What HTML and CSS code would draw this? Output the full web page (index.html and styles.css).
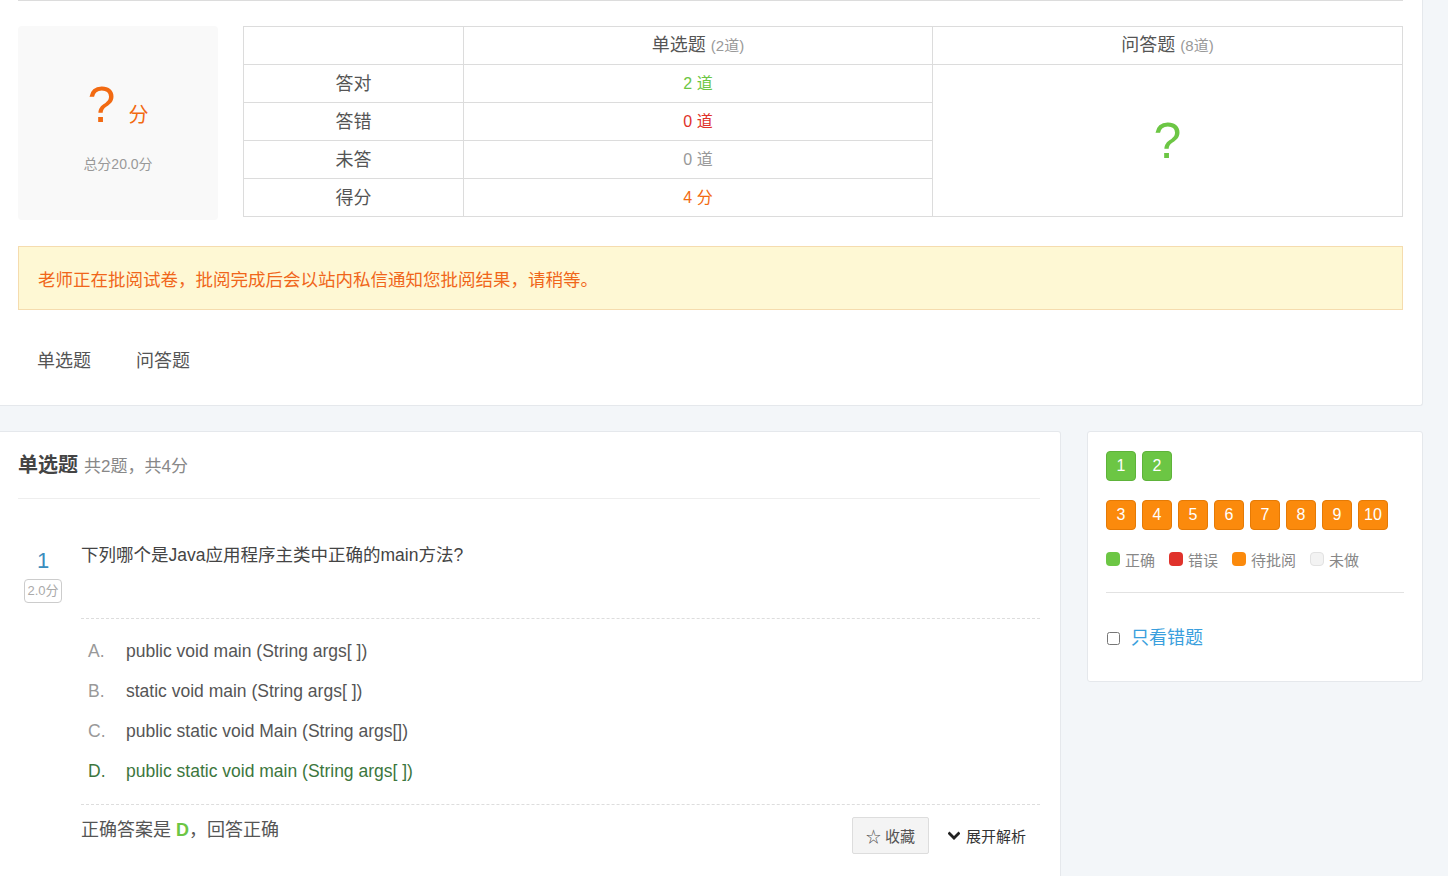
FILE: index.html
```html
<!DOCTYPE html>
<html lang="zh-CN">
<head>
<meta charset="utf-8">
<title>考试结果</title>
<link rel="stylesheet" href="styles.css">
</head>
<body>
<div class="page">
  <section class="summary-card">
    <div class="summary-inner">
      <div class="summary-row">
        <div class="score-box">
          <div class="score-main"><span class="score-q">?</span><span class="score-unit">分</span></div>
          <div class="score-total">总分20.0分</div>
        </div>
        <table class="stat-table">
          <colgroup><col class="c1"><col class="c2"><col class="c3"></colgroup>
          <tr>
            <th></th>
            <th>单选题 <span class="th-sub">(2道)</span></th>
            <th>问答题 <span class="th-sub">(8道)</span></th>
          </tr>
          <tr>
            <td>答对</td>
            <td class="v green">2 <span class="u">道</span></td>
            <td rowspan="4" class="big-q">?</td>
          </tr>
          <tr>
            <td>答错</td>
            <td class="v red">0 <span class="u">道</span></td>
          </tr>
          <tr>
            <td>未答</td>
            <td class="v grey">0 <span class="u">道</span></td>
          </tr>
          <tr>
            <td>得分</td>
            <td class="v orange">4 <span class="u">分</span></td>
          </tr>
        </table>
      </div>
      <div class="alert">老师正在批阅试卷，批阅完成后会以站内私信通知您批阅结果，请稍等。</div>
      <nav class="tabs">
        <span class="tab">单选题</span>
        <span class="tab">问答题</span>
      </nav>
    </div>
  </section>

  <div class="main-row">
    <section class="question-card">
      <header class="sec-head"><span class="sec-title">单选题</span><span class="sec-sub">共2题，共4分</span></header>
      <div class="question">
        <div class="q-num">
          <div class="q-index">1</div>
          <span class="q-score">2.0分</span>
        </div>
        <div class="q-body">
          <div class="q-title">下列哪个是Java应用程序主类中正确的main方法?</div>
          <ul class="options">
            <li class="opt"><span class="opt-l">A.</span><span>public void main (String args[ ])</span></li>
            <li class="opt"><span class="opt-l">B.</span><span>static void main (String args[ ])</span></li>
            <li class="opt"><span class="opt-l">C.</span><span>public static void Main (String args[])</span></li>
            <li class="opt correct"><span class="opt-l">D.</span><span>public static void main (String args[ ])</span></li>
          </ul>
          <div class="answer-row">
            <div class="answer">正确答案是 <b class="ans-key">D</b>，回答正确</div>
            <div class="actions">
              <button class="btn-fav">☆ 收藏</button>
              <span class="expand"><svg class="chev" width="12" height="10" viewBox="0 0 12 10"><polyline points="1.5,2.5 6,7 10.5,2.5" fill="none" stroke="#222" stroke-width="2.8" stroke-linecap="square"/></svg>展开解析</span>
            </div>
          </div>
        </div>
      </div>
    </section>

    <aside class="nav-card">
      <div class="num-row">
        <span class="num ok">1</span><span class="num ok">2</span>
      </div>
      <div class="num-row">
        <span class="num wait">3</span><span class="num wait">4</span><span class="num wait">5</span><span class="num wait">6</span><span class="num wait">7</span><span class="num wait">8</span><span class="num wait">9</span><span class="num wait">10</span>
      </div>
      <div class="legend">
        <span class="lg"><i class="dot ok"></i><span>正确</span></span>
        <span class="lg"><i class="dot bad"></i><span>错误</span></span>
        <span class="lg"><i class="dot wait"></i><span>待批阅</span></span>
        <span class="lg"><i class="dot none"></i><span>未做</span></span>
      </div>
      <label class="only-wrong"><input type="checkbox" class="cb"><span>只看错题</span></label>
    </aside>
  </div>
</div>
</body>
</html>
```
FILE: styles.css
```css
* { box-sizing: border-box; }
body {
  margin: 0;
  background: #f3f6f9;
  font-family: "Liberation Sans", "Noto Sans CJK SC", sans-serif;
  color: #555;
}
.page { width: 1423px; }

.summary-card {
  background: #fff;
  border-right: 1px solid #e5e8ec;
  border-bottom: 1px solid #e5e8ec;
  border-bottom-right-radius: 3px;
  padding: 0 19px 0 18px;
}
.summary-inner {
  border-top: 1px solid #dcdcdc;
  padding-top: 25px;
}
.summary-row { display: flex; gap: 25px; align-items: flex-start; }
.score-box {
  width: 200px;
  height: 194px;
  background: #f9f9f9;
  border-radius: 4px;
  display: flex;
  flex-direction: column;
  align-items: center;
  padding-top: 49px;
}
.score-main { display: flex; align-items: baseline; color: #f26a12; }
.score-q { font-size: 50px; line-height: 60px; }
.score-unit { font-size: 20px; margin-left: 13px; font-family: "Noto Sans CJK SC", sans-serif; }
.score-total { font-size: 14px; color: #999; margin-top: 19px; line-height: 20px; }

.stat-table {
  width: 1159px;
  border-collapse: collapse;
  table-layout: fixed;
  border: 1px solid #dcdcdc;
}
.stat-table col.c1 { width: 220px; }
.stat-table col.c2 { width: 469px; }
.stat-table col.c3 { width: 470px; }
.stat-table th, .stat-table td {
  border: 1px solid #dcdcdc;
  height: 38px;
  padding: 0;
  text-align: center;
  font-weight: normal;
  font-size: 18px;
  color: #555;
  line-height: 36px;
}
.th-sub { font-size: 15px; color: #999; }
.stat-table td.v { font-size: 16px; }
.stat-table td .u { font-size: 16px; }
.green { color: #6cc644 !important; }
.red { color: #e0322b !important; }
.grey { color: #999 !important; }
.orange { color: #f26a12 !important; }
.stat-table td.big-q { font-size: 50px; color: #6cc644; line-height: 50px; padding-top: 0; }

.alert {
  margin-top: 26px;
  height: 64px;
  background: #fef8d4;
  border: 1px solid #f5dcae;
  display: flex;
  align-items: center;
  padding: 0 19px;
  font-size: 17.5px;
  color: #f0661a;
}
.tabs {
  display: flex;
  gap: 45px;
  padding: 39px 0 32px 19px;
  font-size: 18px;
  line-height: 24px;
  color: #555;
}

.main-row {
  display: flex;
  gap: 26px;
  margin-top: 25px;
  align-items: flex-start;
}
.question-card {
  width: 1061px;
  background: #fff;
  border: 1px solid #e5e8ec;
  border-left: none;
  border-radius: 0 3px 0 0;
  padding: 0 20px 40px 18px;
}
.sec-head {
  padding: 21px 0 19px;
  line-height: 24px;
  border-bottom: 1px solid #eeeeee;
  display: flex;
  align-items: baseline;
}
.sec-title { font-size: 20px; font-weight: bold; color: #444; }
.sec-sub { font-size: 17px; color: #888; margin-left: 6px; }

.question { display: flex; padding-top: 42px; }
.q-num {
  width: 50px;
  display: flex;
  flex-direction: column;
  align-items: center;
}
.q-index { font-size: 22px; line-height: 36px; color: #3b8dbd; margin-top: 2px; }
.q-score {
  font-size: 13px;
  color: #aaa;
  border: 1px solid #ccc;
  border-radius: 4px;
  line-height: 22px;
  padding: 0 2px;
}
.q-body { flex: 1; margin-left: 13px; }
.q-title {
  font-size: 17.5px;
  line-height: 28px;
  color: #444;
  padding-bottom: 49px;
  border-bottom: 1px dashed #dddddd;
}
.options { list-style: none; margin: 0; padding: 12px 0 13px; border-bottom: 1px dashed #dddddd; }
.opt { display: flex; font-size: 17.5px; line-height: 40px; color: #555; }
.opt-l { width: 45px; padding-left: 7px; color: #999; }
.opt.correct, .opt.correct .opt-l { color: #3c763d; }

.answer-row {
  display: flex;
  justify-content: space-between;
  align-items: flex-start;
}
.answer { font-size: 18px; line-height: 24px; margin-top: 13px; color: #555; }
.ans-key { color: #6cc644; }
.actions { display: flex; align-items: center; margin-top: 12px; }
.btn-fav {
  width: 77px;
  height: 37px;
  background: #f4f4f4;
  border: 1px solid #dddddd;
  border-radius: 2px;
  font-family: "Liberation Sans", "Noto Sans CJK SC", sans-serif;
  font-size: 15px;
  color: #555;
  padding: 0;
}
.expand {
  display: flex;
  align-items: center;
  margin-left: 19px;
  padding-right: 14px;
  font-size: 15px;
  color: #333;
}
.chev { margin-right: 6px; }

.nav-card {
  width: 336px;
  background: #fff;
  border: 1px solid #e5e8ec;
  border-radius: 3px;
  padding: 19px 18px 31px;
}
.num-row { display: flex; gap: 6px; margin-bottom: 19px; }
.num {
  width: 30px;
  height: 30px;
  border-radius: 4px;
  color: #fff;
  font-size: 16px;
  display: flex;
  align-items: center;
  justify-content: center;
}
.num.ok { background: #6cc644; border: 1px solid #5eb33a; }
.num.wait { background: #fb8a0c; border: 1px solid #e57a05; }
.legend {
  display: flex;
  gap: 14px;
  margin-top: 21px;
  padding-bottom: 21px;
  border-bottom: 1px solid #e2e2e2;
}
.lg { display: flex; align-items: flex-start; font-size: 15px; line-height: 20px; color: #888; }
.dot { display: block; width: 14px; height: 14px; border-radius: 4px; margin-top: 1px; margin-right: 5px; }
.dot.ok { background: #6cc644; }
.dot.bad { background: #e0322b; }
.dot.wait { background: #fb8a0c; }
.dot.none { background: #f3f3f3; border: 1px solid #e2e2e2; }
.only-wrong {
  display: flex;
  align-items: center;
  margin-top: 33px;
  font-size: 18px;
  line-height: 24px;
  color: #3a9fdd;
}
.cb { width: 13px; height: 13px; margin: 0 11px 0 1px; }
```
